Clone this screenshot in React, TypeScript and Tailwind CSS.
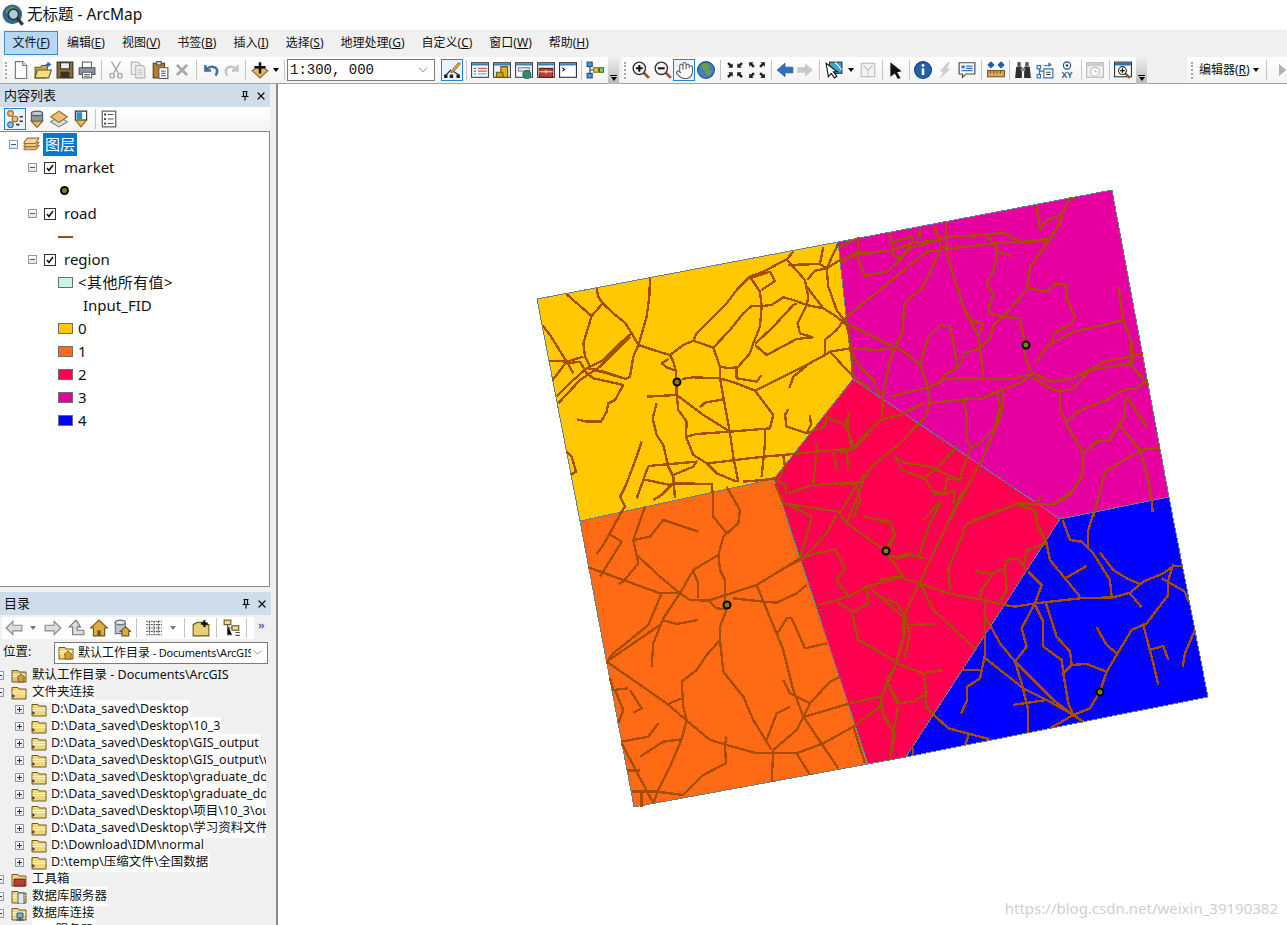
import type { ReactNode } from "react";
import { ChevronDown, Hand, X } from "lucide-react";

// toolbar glyphs, all on a 16 unit grid
const gl: Record<string, ReactNode> = {
  doc: (<><path d="M3 .5h6.5L13 4v11.5H3z" fill="#fff" stroke="#777" /><path d="M9.500 .5V4H13" fill="#e8e8e8" stroke="#777" /></>),
  open: (<><path d="M1 5.500h5l1-1.500h5v2l-2 9H1z" fill="#c9a94a" stroke="#6a5a22" /><path d="M3 8h12.500L13 15H1z" fill="#f3dd85" stroke="#6a5a22" /><path d="M9 4l3-2V.5l3.500 2.500L12 5.500V4z" fill="#2a6cb0" /></>),
  save: (<><path d="M1 1h14v14H1z" fill="#8b6f3a" stroke="#3a3320" /><rect x="4" y="1.500" width="8" height="5.500" fill="#eee" stroke="#3a3320" /><rect x="4" y="9.500" width="8" height="5.500" fill="#3a3320" /></>),
  print: (<><rect x="4" y="1" width="8" height="5" fill="#fff" stroke="#666" /><path d="M1 6h14v6H1z" fill="#8d949b" stroke="#4f5660" /><rect x="4" y="10" width="8" height="5" fill="#fff" stroke="#666" /><path d="M5.500 12h5M5.500 13.500h5" stroke="#666" /></>),
  cut: (<><path d="M4 .5l6 10M12 .5L6 10.500" stroke="#aaa" strokeWidth="1.300" /><circle cx="4.500" cy="13" r="2" fill="none" stroke="#aaa" strokeWidth="1.300" /><circle cx="11.500" cy="13" r="2" fill="none" stroke="#aaa" strokeWidth="1.300" /></>),
  copy: (<><path d="M2 1h6l2 2v9H2z" fill="#eee" stroke="#b5b5b5" /><path d="M6 4h6l2 2v9H6z" fill="#eee" stroke="#b5b5b5" /><path d="M8 8h4M8 10h4M8 12h4" stroke="#bbb" /></>),
  paste: (<><rect x="2" y="2" width="10" height="13" fill="#b9772f" stroke="#5e3d18" /><rect x="5" y=".5" width="4" height="3" fill="#ddd" stroke="#555" /><path d="M7 6h8v9.500H7z" fill="#fff" stroke="#555" /><path d="M9 9h4M9 11h4M9 13h4" stroke="#3a77b8" /></>),
  del: <path d="M3.500 3.500l9 9M12.500 3.500l-9 9" stroke="#a8a8a8" strokeWidth="2.600" />,
  undo: <path d="M3 3.500v5h5M3.500 8C6 4.500 11 4 13 7c1 2 .5 4-1 6" fill="none" stroke="#3f6fa8" strokeWidth="2.200" />,
  redo: <path d="M13 3.500v5H8M12.500 8C10 4.500 5 4 3 7c-1 2-.5 4 1 6" fill="none" stroke="#c3c3c3" strokeWidth="2.200" />,
  add: (<><path d="M1 8.500L8 15l7-6.500L11 6H5z" fill="#e9b85c" stroke="#8a6a2b" /><path d="M8 1v10M3 5.500h10" stroke="#111" strokeWidth="2.200" /></>),
  edit: (<><path d="M2.500 12.500L7 8M9 9l5 3.500" stroke="#222" /><path d="M1 12h3v3H1zM6 12h3v3H6zM12 12h3v3h-3z" fill="#222" /><path d="M8 8l6-7 1.500 1.500-6 7-2.500 1z" fill="#e8a33d" stroke="#6d4a16" strokeWidth=".6" /></>),
  winTable: (<><rect x=".5" y="1.500" width="15" height="13" fill="#fff" stroke="#444" /><rect x="1" y="2" width="14" height="2" fill="#3f7cc2" /><path d="M2.500 6.500h2M2.500 9h2M2.500 11.500h2" stroke="#2f6db5" /><path d="M6 6.500h8M6 9h8" stroke="#d9534f" /><path d="M6 11.500h8" stroke="#6d9fd0" /></>),
  winDb: (<><rect x=".5" y="1.500" width="15" height="13" fill="#f4f4f4" stroke="#444" /><rect x="1" y="2" width="14" height="2" fill="#3f7cc2" /><path d="M7 5h6v9.500H7z" fill="#e0b01f" stroke="#6b5510" /><path d="M3 10h5l1 1v3.500H3z" fill="#caa018" stroke="#6b5510" /></>),
  winGlobe: (<><rect x=".5" y="1.500" width="15" height="13" fill="#fff" stroke="#444" /><rect x="1" y="2" width="14" height="2" fill="#3f7cc2" /><rect x="3" y="6" width="10" height="3" fill="#e8e8e8" stroke="#888" /><circle cx="10.500" cy="12" r="3.500" fill="#3a8f4f" stroke="#1d5f96" /></>),
  winBox: (<><rect x=".5" y="1.500" width="15" height="13" fill="#fff" stroke="#444" /><rect x="1" y="2" width="14" height="2" fill="#3f7cc2" /><path d="M2 6.500h12v8H2z" fill="#b8403c" stroke="#6e1a19" /><path d="M2 9.500h12M8 8v3" stroke="#eeb" /></>),
  winCmd: (<><rect x=".5" y="1.500" width="15" height="13" fill="#fff" stroke="#333" /><rect x="1" y="2" width="14" height="2" fill="#3f7cc2" /><path d="M3 6l2 1.500L3 9" fill="none" stroke="#222" /></>),
  model: (<><rect x="1" y="1" width="4.500" height="4" fill="#4a93dc" stroke="#1e4e82" /><rect x="1" y="11" width="4.500" height="4" fill="#4a93dc" stroke="#1e4e82" /><rect x="7" y="6" width="4" height="4" fill="#f2cb3a" stroke="#8a6d10" /><rect x="12" y="6" width="3.500" height="4" fill="#8fd07e" stroke="#2f7323" /><path d="M3.500 5v6M3.500 8H7M11 8h1" stroke="#444" /></>),
  zin: (<><path d="M10 10l5 5" stroke="#a0522d" strokeWidth="2.500" /><circle cx="6.500" cy="6.500" r="5.500" fill="#f4f4f4" stroke="#333" strokeWidth="1.200" /><path d="M6.500 3.500v6M3.500 6.500h6" stroke="#111" strokeWidth="1.800" /></>),
  zout: (<><path d="M10 10l5 5" stroke="#a0522d" strokeWidth="2.500" /><circle cx="6.500" cy="6.500" r="5.500" fill="#f4f4f4" stroke="#333" strokeWidth="1.200" /><path d="M3.500 6.500h6" stroke="#111" strokeWidth="1.800" /></>),
  globe: (<><circle cx="8" cy="8" r="7.500" fill="#3f7fc4" stroke="#24517f" /><path d="M4 3l4-1 3 2-1 3 3 2-2 4-3-1-1-4-3-1z" fill="#6f9f3a" /></>),
  fin: <path d="M6 6H2l1.200-1.200L1 2.500 2.500 1l2.300 2.200L6 2zM10 6h4l-1.200-1.200L15 2.500 13.500 1l-2.300 2.200L10 2zM6 10H2l1.200 1.200L1 13.500 2.500 15l2.300-2.200L6 14zM10 10h4l-1.200 1.200 2.200 2.300-1.500 1.500-2.300-2.200L10 14z" fill="#222" />,
  fout: <path d="M1 1h4L3.800 2.200 6 4.500 4.500 6 2.200 3.800 1 5zM15 1h-4l1.200 1.200L10 4.500 11.500 6l2.300-2.200L15 5zM1 15h4l-1.200-1.200L6 11.500 4.500 10l-2.300 2.200L1 11zM15 15h-4l1.200-1.200-2.200-2.300 1.500-1.500 2.300 2.200L15 11z" fill="#222" />,
  back: <path d="M1 8l7-6v3.500h7v5H8V14z" fill="#2f6fc0" stroke="#1d4d8c" strokeWidth=".6" />,
  fwd: <path d="M15 8L8 2v3.500H1v5h7V14z" fill="#c8c8c8" />,
  sel: (<><rect x="4" y="1" width="11" height="10" fill="#38a7d8" stroke="#333" /><path d="M9 1l6 7" stroke="#fff" /><path d="M1 2l2 12 2.500-3 3 4 2-1.500-3-4H11z" fill="#fff" stroke="#111" /></>),
  clear: (<><rect x="2" y="2" width="12" height="12" fill="#f2f2f2" stroke="#bbb" /><path d="M4 4l4 4 4-4M8 8v5" fill="none" stroke="#c4c4c4" /></>),
  pointer: <path d="M3 1l10 8-4 1 3 5-2.500 1-2.500-5-4 3z" fill="#111" />,
  info: (<><circle cx="8" cy="8" r="7.500" fill="#2460ab" stroke="#173f75" /><circle cx="8" cy="4" r="1.300" fill="#fff" /><path d="M8 6.500v6" stroke="#fff" strokeWidth="2.200" /></>),
  flash: <path d="M11 1L4 9h3l-3 6 8-8H9l3-6z" fill="#cfcfcf" stroke="#bdbdbd" strokeWidth=".5" />,
  popup: (<><path d="M1 1.500h14v10H7l-3 3v-3H1z" fill="#fff" stroke="#444" /><rect x="3" y="4" width="3" height="2.500" fill="#2f78c4" /><path d="M7 4.500h6M7 6.500h6M3 8.500h10" stroke="#2f78c4" /></>),
  measure: (<><path d="M1 3.500h5M10 3.500h5M1 3.500l2-2v4zM6 3.500l-2-2v4zM10 3.500l2-2v4zM15 3.500l-2-2v4z" stroke="#1f5fa8" fill="#1f5fa8" /><rect x=".5" y="8.500" width="15" height="5.500" fill="#d6a85a" stroke="#7b5a24" /><path d="M3 8.500v2.500M6 8.500v2.500M9 8.500v2.500M12 8.500v2.500" stroke="#7b5a24" /></>),
  bino: (<><path d="M2 5h5v10H1zM9 5h5l1 10H9z" fill="#2f2f2f" /><rect x="3" y="1" width="3" height="4" fill="#555" /><rect x="10" y="1" width="3" height="4" fill="#555" /><rect x="6" y="6" width="4" height="3" fill="#888" /></>),
  route: (<><path d="M7 4h6M3 5v8M3 9h4" stroke="#2f6fb8" fill="none" /><rect x="1" y="4" width="3" height="3" fill="#fff" stroke="#2f6fb8" /><rect x="1" y="12" width="3" height="3" fill="#fff" stroke="#2f6fb8" /><path d="M7 7h8v8H7z" fill="#fff" stroke="#2f6fb8" /><path d="M9 10h4M9 12h4" stroke="#333" /><path d="M11 1l3 2-3 2z" fill="#2f6fb8" /></>),
  xy: (<><circle cx="8" cy="4" r="3.200" fill="#fff" stroke="#1f4f8a" /><circle cx="8" cy="4" r="1.200" fill="#1f4f8a" /><text x="8" y="15" textAnchor="middle" fontSize="7.500" fontWeight="700" fill="#1f4f8a" fontFamily="Liberation Sans">XY</text></>),
  time: (<><rect x=".5" y="1.500" width="15" height="13" fill="#eee" stroke="#bbb" /><rect x="1" y="2" width="14" height="2.500" fill="#ccc" /><circle cx="8" cy="9.500" r="3.800" fill="#fff" stroke="#bbb" /><path d="M8 7.500v2h2" fill="none" stroke="#bbb" /></>),
  viewer: (<><rect x=".5" y="1" width="15" height="13" fill="#fff" stroke="#333" /><rect x="1" y="1.500" width="14" height="2.500" fill="#2f6db5" /><path d="M10 11l4 4" stroke="#a0522d" strokeWidth="2" /><circle cx="7.500" cy="8.500" r="3.500" fill="#f4f4f4" stroke="#333" /><path d="M7.500 6.500v4M5.500 8.500h4" stroke="#111" /></>),
  tocOrder: (<><circle cx="4" cy="3" r="2.500" fill="#f0c070" stroke="#9a6d2a" /><circle cx="8" cy="8" r="2.500" fill="#f0c070" stroke="#9a6d2a" /><circle cx="4" cy="13" r="2.500" fill="#8fb7dc" stroke="#41709b" /><path d="M12 6h3M12 10h3M9 13h3" stroke="#333" strokeWidth="1.500" /></>),
  tocDb: (<><path d="M3 3v7h10V3z" fill="#8a95a3" stroke="#525c68" /><ellipse cx="8" cy="3" rx="5" ry="2" fill="#c3cad3" stroke="#525c68" /><path d="M3 10l5 5.500 5-5.500z" fill="#e9b85c" stroke="#8a6a2b" /></>),
  tocLayers: (<><path d="M8 6l7.500 4.500L8 15 .5 10.500z" fill="#ddd" stroke="#888" /><path d="M8 1l7.500 5L8 11 .5 6z" fill="#e9bf72" stroke="#8a6a2b" /></>),
  tocSource: (<><path d="M3 1h10v8H3z" fill="#fff" stroke="#333" /><path d="M4 2h5v6H4z" fill="#2a8fc4" /><path d="M3 9l5 6 5-6z" fill="#e9b85c" stroke="#8a6a2b" /></>),
  tocList: (<><rect x="2" y="1" width="12" height="14" fill="#fff" stroke="#555" /><circle cx="4.500" cy="4" r="1" fill="#333" /><circle cx="4.500" cy="8" r="1" fill="#333" /><circle cx="4.500" cy="12" r="1" fill="#333" /><path d="M7 4h5M7 8h5M7 12h5" stroke="#555" /></>),
  stack: (<><path d="M1 12l3-3h11l-3 4H1z" fill="#e9bf72" stroke="#9a7430" /><path d="M1 9l3-3h11l-3 4H1z" fill="#f0c98a" stroke="#9a7430" /><path d="M1 6l3-4h11l-3 5H1z" fill="#f4d6a2" stroke="#9a7430" /></>),
  grayBack: <path d="M1 8l6-6v3.500h8v5H7V14z" fill="#ddd" stroke="#888" />,
  grayFwd: <path d="M15 8L9 2v3.500H1v5h8V14z" fill="#ddd" stroke="#888" />,
  up: <path d="M8 1L2 7h3v7h10v-4H9V7h3z" fill="#ddd" stroke="#777" />,
  home: (<><path d="M8 1L.5 8H3v7h10V8h2.500z" fill="#dcae3f" stroke="#6f5316" /><rect x="6.500" y="10" width="3" height="5" fill="#6f5316" /></>),
  dbHome: (<><path d="M2 3v10h9V3z" fill="#bcc5cf" stroke="#697480" /><ellipse cx="6.500" cy="3" rx="4.500" ry="2" fill="#dde2e8" stroke="#697480" /><path d="M11 7l-4.500 4H8v4h6v-4h1.500z" fill="#dcae3f" stroke="#6f5316" /></>),
  grid: <path d="M1 2h14M1 5h14M1 8h14M1 11h14M1 14h14M4 2v12M8 2v12M12 2v12" stroke="#555" strokeDasharray="1.500 .7" />,
  newFolder: (<><path d="M1 5l4-2h5v2h5v10H1z" fill="#e7cf73" stroke="#6b5a22" /><path d="M11 1v6M8 4h6" stroke="#111" strokeWidth="2" /></>),
  tree: (<><rect x="1" y="1" width="6" height="4" fill="#f2d88a" stroke="#6b5a22" /><rect x="8" y="6" width="6" height="4" fill="#f2d88a" stroke="#6b5a22" /><path d="M4 5v9h4M4 8h4" stroke="#555" /><path d="M11 12h4M11 14.500h4" stroke="#555" /></>),
};

const Glyph = ({ name, size = 18 }: { name: string; size?: number }) => (
  <svg viewBox="0 0 16 16" width={size} height={size} className="block shrink-0">
    {gl[name]}
  </svg>
);

const Sep = ({ w = 7 }: { w?: number }) => (
  <div className="flex h-[20px] shrink-0 justify-center" style={{ width: w }}>
    <div className="w-px bg-[#c4c4c4]" />
  </div>
);

const Grip = () => (
  <div className="mx-[2px] h-[17px] w-[3px] shrink-0 border-l-2 border-dotted border-[#a8a8a8]" />
);

const Tool = ({ name, active, w = 22 }: { name: string; active?: boolean; w?: number }) => (
  <div
    className={
      active
        ? "flex h-[22px] items-center justify-center border border-[#1f86d6] bg-[#eaf4fc]"
        : "flex h-[22px] items-center justify-center"
    }
    style={{ width: w }}
  >
    {name === "hand" ? <Hand size={19} strokeWidth={1.3} color="#555" fill="#fff" /> : <Glyph name={name} />}
  </div>
);

const Drop = ({ w = 10, dim }: { w?: number; dim?: boolean }) => (
  <div className="flex shrink-0 justify-center" style={{ width: w }}>
    <div
      className={
        dim
          ? "h-0 w-0 border-x-[3.500px] border-t-[4px] border-x-transparent border-t-[#777]"
          : "h-0 w-0 border-x-[3.500px] border-t-[4px] border-x-transparent border-t-black"
      }
    />
  </div>
);

const Overflow = () => (
  <div className="flex h-[27px] w-[11px] flex-col items-center justify-end bg-gradient-to-b from-[#f0f0f0] to-[#b9b9b9] pb-[3px]">
    <div className="mb-px h-px w-[7px] bg-black" />
    <div className="h-0 w-0 border-x-[3.500px] border-t-[4px] border-x-transparent border-t-black" />
  </div>
);

const menus: [string, string][] = [
  ["文件", "F"], ["编辑", "E"], ["视图", "V"], ["书签", "B"], ["插入", "I"], ["选择", "S"],
  ["地理处理", "G"], ["自定义", "C"], ["窗口", "W"], ["帮助", "H"],
];

const Minus = () => (
  <div className="flex h-[9px] w-[9px] shrink-0 items-center justify-center border border-[#8f9aa6] bg-gradient-to-b from-white to-[#dfe4ea]">
    <div className="h-px w-[5px] bg-[#3d5d80]" />
  </div>
);

const Plus = () => (
  <div className="relative flex h-[9px] w-[9px] shrink-0 items-center justify-center border border-[#8f9aa6] bg-gradient-to-b from-white to-[#dfe4ea]">
    <div className="h-px w-[5px] bg-[#333]" />
    <div className="absolute h-[5px] w-px bg-[#333]" />
  </div>
);

const Check = () => (
  <div className="flex h-[12px] w-[12px] shrink-0 items-center justify-center border border-[#333] bg-white">
    <svg viewBox="0 0 10 10" width="10" height="10">
      <path d="M2 5l2 2.500L8 2" fill="none" stroke="#111" strokeWidth="1.600" />
    </svg>
  </div>
);

const Layer = ({ name }: { name: string }) => (
  <div className="flex h-[23px] items-center pl-[28px]">
    <Minus />
    <div className="ml-[7px]"><Check /></div>
    <span className="ml-[8px]">{name}</span>
  </div>
);

const Swatch = ({ color, label }: { color: string; label: string }) => (
  <div className="flex h-[23px] items-center pl-[58px]">
    <div className="h-[11px] w-[15px] border border-[#6e6e6e]" style={{ background: color }} />
    <span className="ml-[5px] tracking-[0.4px]">{label}</span>
  </div>
);

const Folder = ({ tone = "#f0d67c", children }: { tone?: string; children?: ReactNode }) => (
  <svg viewBox="0 0 16 14" width="16" height="14" className="shrink-0">
    <path d="M1 3V1.500h6L8 3h7v10H1z" fill={tone} stroke="#6b5a22" />
    <path d="M1.500 5.500h13M1.500 7.500h13" stroke="#fff3b8" />
    {children}
  </svg>
);

const homeBadge = <path d="M10 5l-4 3.500h1V13h6V8.500h1z" fill="#cf9f35" stroke="#5e4612" strokeWidth=".7" />;
const arrowBadge = <path d="M1.500 8l2.500 2-2.500 2z" fill="#333" />;
const boxBadge = <path d="M3 6h11v7H3z" fill="#b8403c" stroke="#6e1a19" />;
const serverBadge = <path d="M7 3h6v11H7z" fill="#dfe6ee" stroke="#47627f" />;
const dbBadge = <path d="M6 6h6v5H6zM8 11h2v2H8zM5 13h8" fill="#7fa7cf" stroke="#2f5478" />;

const conn = [
  "D:\\Data_saved\\Desktop",
  "D:\\Data_saved\\Desktop\\10_3",
  "D:\\Data_saved\\Desktop\\GIS_output",
  "D:\\Data_saved\\Desktop\\GIS_output\\workspace",
  "D:\\Data_saved\\Desktop\\graduate_documents",
  "D:\\Data_saved\\Desktop\\graduate_document2",
  "D:\\Data_saved\\Desktop\\项目\\10_3\\output",
  "D:\\Data_saved\\Desktop\\学习资料文件夹",
  "D:\\Download\\IDM\\normal",
  "D:\\temp\\压缩文件\\全国数据",
];

const TopRow = ({ label, white = true, children }: { label: string; white?: boolean; children: ReactNode }) => (
  <div className="flex h-[17px] items-center">
    <div className="-ml-[5px]"><Plus /></div>
    <div className="ml-[7px] flex w-[18px] justify-start">{children}</div>
    <span className={white ? "ml-[3px] whitespace-nowrap bg-white pr-px" : "ml-[3px] whitespace-nowrap"}>{label}</span>
  </div>
);

// traced road lines, written in the pixel space of a 3x crop of each map quarter
const roadsNW = [
  "110,343 150,378 185,408 218,370", "200,325 205,350 218,370 250,400 285,428 305,460 325,495",
  "360,295 358,350 350,410 330,480 325,495 310,530 305,560 300,590 288,597 230,580 190,570",
  "325,495 370,510 420,525 460,495 490,482 550,503 600,450 640,400 665,378 695,378 725,375 760,352 790,360 830,375 880,385 920,410 950,435 960,480 965,530 968,590",
  "420,525 430,545 437,570 440,605 440,645 445,690 470,725 468,770 490,825 530,850 560,880 620,905",
  "395,550 415,537", "395,550 410,562 437,572",
  "490,482 500,460 540,420 590,370 620,330 660,290 700,275 770,238 790,215",
  "660,290 690,335 695,378 690,440 670,490 660,520 625,560 600,565 570,560 550,503",
  "665,293 720,275 735,303 695,330", "570,560 570,595 580,650 600,760 610,830 625,905",
  "455,597 490,592 570,595 620,610 675,632 730,705 720,745 600,755 500,762 470,770",
  "440,645 520,705 600,755", "510,682 525,668 580,658", "352,650 440,645",
  "380,670 368,715 380,765 400,795 415,860 430,890 435,955", "335,785 320,830 290,910 270,955",
  "355,858 500,845 490,860 430,885", "355,858 340,900 320,955", "340,898 420,915 430,910 545,912 550,955",
  "430,910 395,945 370,960", "535,850 700,830 760,825 860,815 975,805", "705,750 705,790 695,890",
  "675,632 820,560 885,525 900,515 960,505 1020,505", "620,560 620,595 680,605 695,585", "830,558 790,590 778,625",
  "675,495 710,525 800,477 848,472 810,460 803,430 830,375", "675,492 730,440 790,375 800,370",
  "885,525 885,480 920,450 950,410", "900,515 960,580 1020,625", "770,238 825,300 835,350 830,375",
  "775,255 870,252 880,200", "870,252 890,265 925,190", "832,300 855,272 890,265 930,240 985,215 1020,225",
  "890,265 895,320 920,390 950,430", "830,320 880,385", "37,435 60,465 110,545 130,580",
  "58,543 100,543 110,550 150,545 170,580", "68,600 110,545 160,530", "80,650 130,600 170,565 220,540 270,490 305,460",
  "85,670 150,600 210,560 300,470", "170,580 190,595 280,615 255,660 235,670 230,695 213,725 170,725 140,718",
  "175,565 220,575 288,597", "185,408 160,490 165,530 180,560", "110,815 125,830 138,875 122,885",
  "775,687 765,705 770,740 830,760", "840,705 843,735 830,760 885,740 890,710 945,735 958,700",
  "945,735 975,805 1020,760", "860,785 860,815 850,910", "910,815 920,870", "760,825 765,860 745,900",
  "740,900 765,915 770,940 850,915 930,910 990,905 1020,880", "640,905 700,900 735,895",
];
const roadsNE = [
  "0,200 55,175 55,240 75,288 140,275 175,245 210,205 295,180", "0,250 50,225 155,210 215,190 290,180 330,170 430,165 490,158 550,190 640,175",
  "150,158 160,225 180,235 215,190", "160,185 215,170 220,190", "240,140 238,175",
  "280,135 300,180 300,210 270,280 245,325 195,365 190,410 190,450 165,505 150,540 130,640 125,720",
  "318,125 320,220 345,300 370,380 415,470 420,500 430,590", "300,200 330,205 470,190 550,185 640,175", "20,410 260,215 300,210",
  "0,430 20,430 150,495 185,510 240,555 260,610 270,670 255,710 180,790 100,855 60,900 0,1000", "30,505 110,510 160,505",
  "240,555 265,470 300,435 330,440 345,510 350,565 320,580 290,615", "30,510 60,560 100,600 120,650",
  "150,650 270,620 325,595 520,597 580,580 635,605 690,597 750,570 790,545 870,530 910,520", "370,520 365,550 345,570",
  "370,520 420,505 450,475 460,435 490,410 560,330 570,260 600,220 660,130 665,105 620,120 600,150 590,75", "665,105 690,55 705,55",
  "443,170 470,205 470,240 458,275 440,310 460,345 445,385 450,400 490,410 540,415 555,495 555,530 570,570 580,580", "470,215 515,228",
  "370,380 385,415 430,432 415,470", "565,325 620,335 650,310 680,315 680,355 705,410 695,430 640,460 640,490",
  "590,545 620,500 700,455 790,435 850,420 875,490 875,550", "835,320 850,420", "580,590 620,620 660,635 700,625 750,570 870,550 925,615",
  "660,635 660,690 680,725 720,690 800,660 850,630 890,625 920,600", "860,650 920,740",
  "855,650 855,710 820,760 810,780 770,785 730,820 680,735 680,725", "840,735 900,810 960,802", "900,810 920,880 935,960 938,995",
  "900,812 795,875 760,1010", "730,820 730,880 690,945 650,970 590,975 535,970 400,1020", "605,945 585,975",
  "270,670 350,660 430,655 480,630 540,610 575,585", "125,720 180,705 250,670", "490,630 490,680 470,740 420,790 395,800 380,780 380,700 368,660",
  "470,630 480,680 460,760 430,830 330,1020", "395,800 370,860 360,900 290,870", "165,830 185,870 255,895 285,945 315,935 320,895 360,900",
  "165,830 190,848 270,860 300,870", "350,800 290,865 250,895", "0,820 35,808 100,740 125,720", "25,700 22,740 35,808",
  "0,815 20,815 25,870", "0,915 50,910 60,960 40,1015", "300,965 250,1020",
];
const roadsSW = [
  "175,0 150,50 165,80 155,95 100,195 80,222", "115,160 155,185 90,290", "225,80 190,180 205,250 160,305 145,312",
  "190,180 240,170 280,120 385,155", "195,220 270,290 330,340", "55,262 270,340 330,340 360,360 415,362 440,385 470,388",
  "415,362 560,315 650,260 690,235", "330,340 370,270 445,225 460,170 505,130 510,90 470,20", "445,225 450,270 465,300 465,370",
  "430,30 430,110 470,160", "370,275 385,310 385,355", "275,340 235,435 130,520 110,545", "330,340 280,415 250,490 245,560",
  "275,420 320,432 385,420", "110,545 270,435", "490,355 580,365 620,368 680,340 710,315",
  "470,388 450,440 450,480 410,525 380,570 335,605 340,680 350,720", "450,480 460,575 520,650 550,720 605,810",
  "560,315 640,510 670,630 700,710 805,865", "620,465 650,415 665,415 705,505 770,490", "640,600 660,640 720,670",
  "110,545 290,670 360,730 420,780 470,795 560,820 680,820 760,790 850,740 930,680", "610,810 680,750 720,670 780,605 810,590",
  "705,710 840,670 930,650", "610,810 605,905", "590,780 620,700 660,680", "465,795 468,850 400,885 340,945 260,935 185,935",
  "155,785 235,770 265,730", "120,595 130,630 175,625", "135,630 160,690 145,730", "180,630 215,685 190,698",
  "210,830 280,785 335,778 350,720", "335,778 300,860 265,930 250,970", "155,790 250,970", "170,872 210,872", "215,935 215,980",
  "295,672 335,655", "470,770 465,795", "680,820 720,885", "850,740 885,850", "615,10 640,70 805,95 830,130 945,210",
  "640,70 670,80 725,110 715,150 690,235", "800,105 770,160 700,235", "650,260 720,225 795,208 825,265 800,300 835,350 745,375",
  "835,350 890,320 1000,290", "890,320 895,370 850,395 805,368", "845,395 865,480 980,545 1000,470 1000,410 900,325",
  "880,110 960,125 975,160 945,210", "980,230 1020,220", "945,210 1000,290", "980,545 945,620 930,680 975,765 960,835",
  "965,630 990,670", "880,0 870,30 830,130",
];
const roadsSE = [
  "548,90 570,150 605,155 640,190 690,270 695,320", "640,70 625,120 625,170", "660,188 700,240 740,265 780,282",
  "500,160 510,210 600,320", "555,265 620,228", "445,245 485,285 465,340 425,415 440,470 405,515",
  "375,345 405,350 465,340 600,325 700,322 750,308 790,275 850,250 880,228 910,228", "880,222 865,270 865,315 800,400 755,420 680,545 660,605 630,655 580,675",
  "845,265 915,305 925,335", "750,310 785,352", "465,345 490,395 490,470 545,510 550,550 565,640 580,675",
  "498,340 530,440 570,485 575,525 620,522 680,545", "575,525 550,550", "650,412 680,465 712,492", "790,405 820,520 835,585",
  "808,480 850,468 865,510", "945,420 915,490 908,530", "310,370 360,460 405,515 425,580 445,660 443,730",
  "405,515 520,630 580,675 610,695", "310,500 430,595 500,630 580,675 510,715", "398,645 500,630",
  "315,335 315,495 300,565 262,590 262,630 243,670", "245,540 300,540", "135,600 140,655 205,715 330,748", "268,730 255,765", "100,775 100,795",
  "0,270 50,260 120,280 205,310 300,328 375,345", "250,0 120,275 75,370 75,430 50,520 0,630", "180,40 150,100 115,205",
  "35,195 50,205 90,195 135,205", "120,280 160,360 290,480", "90,405 165,402", "0,320 50,340 75,375 90,430 75,500",
  "50,520 130,550 140,610 100,635 50,640 20,570 50,520", "135,548 190,540", "415,45 465,60 470,100 500,160 440,180 430,230",
  "255,105 340,70 415,40 520,45 580,0", "255,105 250,130 205,235 210,300", "285,238 305,250 340,248 375,235 380,300 360,335",
  "340,250 305,300 300,328", "375,235 380,210 415,205 440,245", "55,645 40,730 30,810", "5,640 10,680 45,730", "0,95 30,95 45,140 18,185",
  "155,0 190,15 220,0", "225,0 220,40",
];

const Roads = ({ x, y, lines }: { x: number; y: number; lines: string[] }) => (
  <g
    transform={`translate(${x} ${y}) scale(0.3333)`}
    fill="none"
    stroke="#a84d00"
    strokeWidth="7"
    strokeLinejoin="round"
    shapeRendering="crispEdges"
  >
    {lines.map((l) => (
      <polyline key={l} points={l} />
    ))}
  </g>
);

const markets = [[677, 382], [1026, 345], [886, 551], [727, 605], [1100, 692]];
const regions: [string, string][] = [
  ["#ffc800", "537,299 838,242 853,379 774,479 580,521"],
  ["#ff6a14", "580,521 774,479 868,764 634,807"],
  ["#ff0050", "774,479 853,379 1060,519 906,757 868,764"],
  ["#e600a0", "838,242 1112,190 1169,497 1060,519 853,379"],
  ["#0000ff", "1060,519 1169,497 1208,697 906,757"],
];

const PanelTitle = ({ title }: { title: string }) => (
  <div className="flex h-[23px] items-center justify-between bg-[#cfdcea] pl-[4px] pr-[3px] text-[13px] text-[#111]">
    <span>{title}</span>
    <div className="flex items-center gap-[5px]">
      <svg viewBox="0 0 10 10" width="10" height="11">
        <path d="M2.500 1h5M3.500 1v5M6.500 1v5M1.500 6h7M5 6v4" fill="none" stroke="#111" strokeWidth="1.200" />
      </svg>
      <X size={12} strokeWidth={2.600} color="#111" />
    </div>
  </div>
);

export default function App() {
  return (
    <div className="flex h-[925px] w-[1287px] flex-col overflow-hidden bg-[#f0f0f0] font-['Noto_Sans','Noto_Sans_CJK_SC',sans-serif] text-[#111]">
      {/* title bar */}
      <div className="flex h-[30px] shrink-0 items-center bg-white pl-[2px] text-[15.500px]">
        <svg viewBox="0 0 20 20" width="23" height="23" className="shrink-0">
          <circle cx="9" cy="9" r="8.500" fill="#2d6c8f" />
          <path d="M3 6l5-4 5 2-2 4 3 3-5 3-3-3z" fill="#5e9a57" />
          <circle cx="10" cy="9" r="4.500" fill="#a9cddd" stroke="#333" strokeWidth="1.500" />
          <path d="M13 12l5 6" stroke="#333" strokeWidth="2.800" />
        </svg>
        <span className="ml-[2px]">无标题 - ArcMap</span>
      </div>

      {/* menu */}
      <div className="flex h-[27px] shrink-0 items-start pl-[4px] pt-px text-[12px]">
        {menus.map(([t, k], i) => (
          <div
            key={t}
            className={
              i === 0
                ? "flex h-[24px] items-center border border-[#3a8ccd] bg-[#b5d8f3] px-[7.500px]"
                : "flex h-[24px] items-center px-[8.500px]"
            }
          >
            {t}(<u>{k}</u>)
          </div>
        ))}
      </div>

      {/* toolbars */}
      <div className="flex h-[27px] shrink-0 items-center border-b border-[#a0a0a0] pl-[3px]">
        <div className="flex h-[26px] items-center bg-gradient-to-b from-white to-[#f3f3f3]">
          <Grip />
          <Tool name="doc" />
          <Tool name="open" />
          <Tool name="save" />
          <Tool name="print" />
          <Sep />
          <Tool name="cut" />
          <Tool name="copy" />
          <Tool name="paste" />
          <Tool name="del" />
          <Sep />
          <Tool name="undo" w={21} />
          <Tool name="redo" w={21} />
          <Sep />
          <Tool name="add" />
          <Drop />
          <Sep w={6} />
          <div className="flex h-[22px] w-[148px] items-center justify-between border border-[#7a7a7a] bg-white pl-[2px] pr-[4px] font-['Liberation_Mono',monospace] text-[14px]">
            <span>1:300, 000</span>
            <ChevronDown size={14} strokeWidth={1.200} color="#555" />
          </div>
          <div className="w-[6px]" />
          <Tool name="edit" active />
          <Sep w={6} />
          <Tool name="winTable" />
          <Tool name="winDb" />
          <Tool name="winGlobe" />
          <Tool name="winBox" />
          <Tool name="winCmd" />
          <Sep w={5} />
          <Tool name="model" />
          <div className="w-[2px]" />
          <Overflow />
        </div>
        <div className="ml-[3px] flex h-[26px] items-center bg-gradient-to-b from-white to-[#f3f3f3]">
          <Grip />
          <div className="w-[1px]" />
          <Tool name="zin" />
          <Tool name="zout" w={21} />
          <Tool name="hand" active />
          <Tool name="globe" />
          <Sep />
          <Tool name="fin" />
          <Tool name="fout" />
          <Sep />
          <Tool name="back" w={20} />
          <Tool name="fwd" w={20} />
          <Sep w={8} />
          <Tool name="sel" />
          <Drop w={12} />
          <Tool name="clear" />
          <Sep w={6} />
          <Tool name="pointer" />
          <Sep w={5} />
          <Tool name="info" />
          <Tool name="flash" />
          <Tool name="popup" />
          <Sep />
          <Tool name="measure" />
          <Sep w={5} />
          <Tool name="bino" />
          <Tool name="route" />
          <Tool name="xy" />
          <Sep w={6} />
          <Tool name="time" />
          <Sep w={6} />
          <Tool name="viewer" />
          <div className="w-[2px]" />
          <Overflow />
        </div>
        <div className="ml-[40px] flex h-[26px] min-w-0 flex-1 items-center bg-gradient-to-b from-white to-[#f3f3f3] pl-[2px]">
          <Grip />
          <span className="ml-[3px] whitespace-nowrap text-[12px]">编辑器(<u>R</u>)</span>
          <Drop w={12} />
          <Sep w={9} />
          <div className="ml-[8px] h-0 w-0 shrink-0 border-y-[6px] border-l-[7px] border-y-transparent border-l-[#b0b0b0]" />
        </div>
      </div>

      <div className="flex min-h-0 flex-1">
        {/* left column */}
        <div className="flex min-h-0 w-[276px] shrink-0 flex-col overflow-hidden">
          <div className="w-[270px]">
            <PanelTitle title="内容列表" />
            <div className="flex h-[24px] items-center bg-gradient-to-b from-white to-[#f3f3f3] pl-[4px]">
              <Tool name="tocOrder" active />
              <Tool name="tocDb" />
              <Tool name="tocLayers" />
              <Tool name="tocSource" />
              <Sep w={6} />
              <Tool name="tocList" />
            </div>
            <div className="h-[456px] border border-l-0 border-[#828790] bg-white pt-px text-[15px] leading-none text-[#111]">
              <div className="flex h-[23px] items-center pl-[9px]">
                <Minus />
                <div className="ml-[5px]"><Glyph name="stack" size={17} /></div>
                <span className="ml-[3px] flex h-[23px] w-[34px] items-center justify-center bg-[#0078d7] text-white">图层</span>
              </div>
              <Layer name="market" />
              <div className="flex h-[23px] items-center pl-[60px]">
                <div className="h-[9px] w-[9px] rounded-full border-2 border-black bg-[#808000]" />
              </div>
              <Layer name="road" />
              <div className="flex h-[23px] items-center pl-[58px]">
                <div className="h-[2px] w-[15px] bg-[#a84d00]" />
              </div>
              <Layer name="region" />
              <Swatch color="#c4f7e8" label="<其他所有值>" />
              <div className="flex h-[23px] items-center pl-[83px]">Input_FID</div>
              <Swatch color="#ffc800" label="0" />
              <Swatch color="#ff6a14" label="1" />
              <Swatch color="#ff0050" label="2" />
              <Swatch color="#e600a0" label="3" />
              <Swatch color="#0000ff" label="4" />
            </div>
          </div>

          <div className="mt-[5px] w-[271px]">
            <PanelTitle title="目录" />
            <div className="flex h-[26px] items-center pl-[2px]">
              <div className="flex h-[22px] w-[252px] items-center bg-white pl-[2px]">
                <Tool name="grayBack" w={20} />
                <Drop w={18} dim />
                <Tool name="grayFwd" w={22} />
                <Tool name="up" w={23} />
                <Tool name="home" w={23} />
                <Tool name="dbHome" w={23} />
                <Sep w={6} />
                <Tool name="grid" w={30} />
                <Drop w={8} dim />
                <Sep w={14} />
                <Tool name="newFolder" w={20} />
                <Sep w={10} />
                <Tool name="tree" />
                <Sep w={6} />
              </div>
              <span className="-mt-[8px] ml-[4px] text-[11px] font-bold leading-none text-[#5a6ea8]">»</span>
            </div>
            <div className="flex h-[23px] items-center pl-[3px] text-[12.500px]">
              <span className="w-[51px]">位置:</span>
              <div className="flex h-[22px] w-[214px] items-center border border-[#7a7a7a] bg-white pl-[3px] pr-[3px]">
                <Folder>{homeBadge}</Folder>
                <div className="ml-[4px] flex-1 overflow-hidden whitespace-nowrap text-[12px]">
                  默认工作目录<span className="text-[11px] tracking-[-0.2px] text-[#111]"> - Documents\ArcGIS</span>
                </div>
                <ChevronDown size={13} strokeWidth={1.200} color="#555" />
              </div>
            </div>
            <div className="mt-[3px] w-[266px] overflow-hidden text-[12.500px]">
              <TopRow label="默认工作目录 - Documents\ArcGIS" white={false}><Folder tone="#d8c47c">{homeBadge}</Folder></TopRow>
              <TopRow label="文件夹连接"><Folder>{arrowBadge}</Folder></TopRow>
              {conn.map((c) => (
                <div key={c} className="flex h-[17px] items-center pl-[15px]">
                  <Plus />
                  <div className="ml-[7px]"><Folder>{arrowBadge}</Folder></div>
                  <span className="ml-[4px] whitespace-nowrap bg-white pr-px">{c}</span>
                </div>
              ))}
              <TopRow label="工具箱"><Folder>{boxBadge}</Folder></TopRow>
              <TopRow label="数据库服务器"><Folder>{serverBadge}</Folder></TopRow>
              <TopRow label="数据库连接"><Folder>{dbBadge}</Folder></TopRow>
              <TopRow label="GIS 服务器"><Folder /></TopRow>
            </div>
          </div>
        </div>

        {/* map */}
        <div className="relative min-w-0 flex-1 border-l-2 border-[#8a8a8a] bg-white">
          <svg viewBox="278 84 1009 841" width="1009" height="841" className="block">
            {regions.map(([c, p]) => (
              <polygon key={c} points={p} fill={c} stroke="#66808e" strokeWidth="1" shapeRendering="crispEdges" />
            ))}
            <Roads x={530} y={180} lines={roadsNW} />
            <Roads x={840} y={180} lines={roadsNE} />
            <Roads x={570} y={480} lines={roadsSW} />
            <Roads x={880} y={490} lines={roadsSE} />
            {markets.map(([x, y]) => (
              <circle key={x} cx={x} cy={y} r="3.500" fill="#808000" stroke="#000" strokeWidth="2" />
            ))}
          </svg>
          <span className="absolute bottom-[9px] right-[9px] text-[15px] leading-none text-[#cfcfcf]">
            https://blog.csdn.net/weixin_39190382
          </span>
        </div>
      </div>
    </div>
  );
}
